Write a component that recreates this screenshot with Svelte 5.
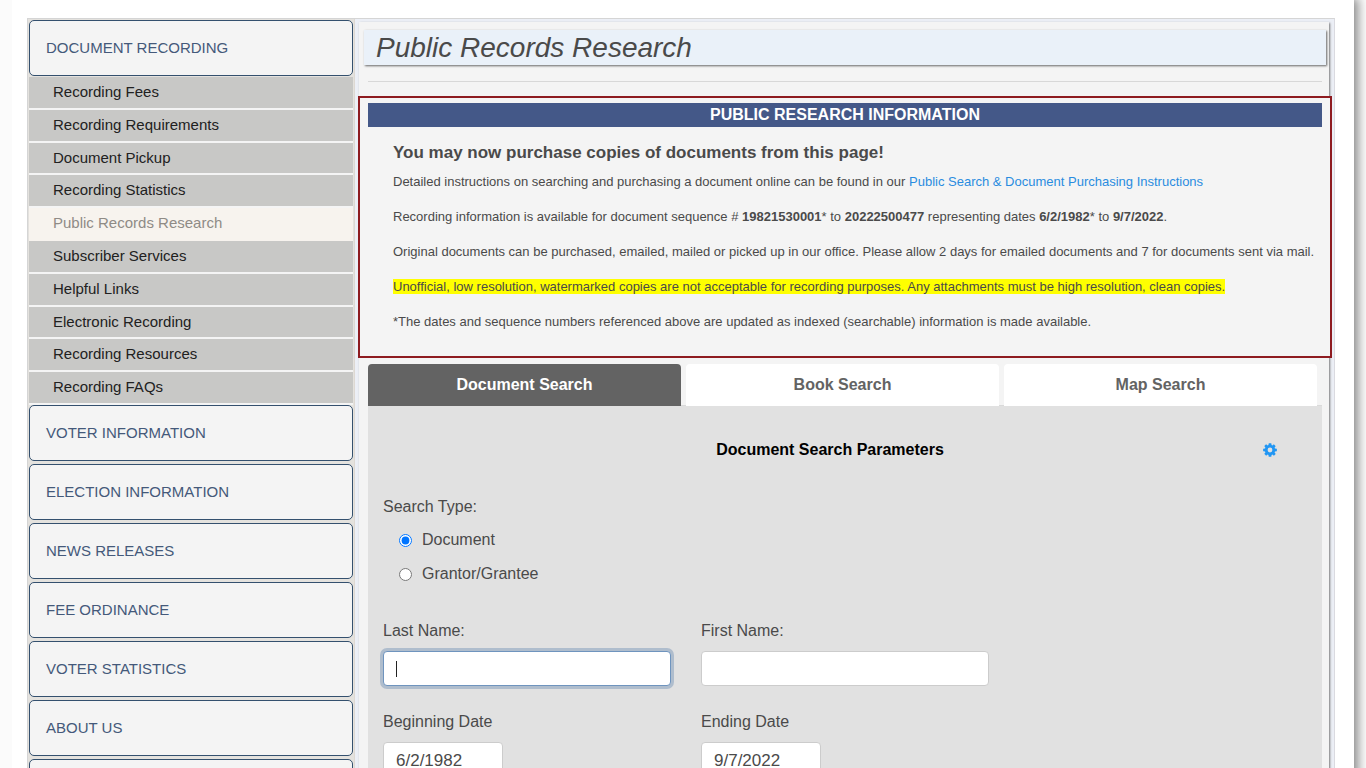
<script lang="ts">
    import { onMount } from 'svelte';

    const recordingLinks = [
        "Recording Fees",
        "Recording Requirements",
        "Document Pickup",
        "Recording Statistics",
        "Public Records Research",
        "Subscriber Services",
        "Helpful Links",
        "Electronic Recording",
        "Recording Resources",
        "Recording FAQs"
    ];

    const sections = [
        "Voter Information",
        "Election Information",
        "News Releases",
        "Fee Ordinance",
        "Voter Statistics",
        "About Us"
    ];

    const tabs = ["Document Search", "Book Search", "Map Search"];

    let currentLink = $state("Public Records Research");
    let currentTab = $state("Document Search");
    let searchType = $state("document");

    let lastName = $state("");
    let firstName = $state("");
    let beginDate = $state("6/2/1982");
    let endDate = $state("9/7/2022");

    let lastNameInput: HTMLInputElement;

    onMount(() => lastNameInput.focus());
</script>

<div class="page">
    <div class="columns">
        <nav class="sidebar">
            <button type="button" class="section">Document Recording</button>
            <ul>
                {#each recordingLinks as link}
                    <li><a href="#top" class:active={link == currentLink} onclick={() => currentLink = link}>{link}</a></li>
                {/each}
            </ul>
            {#each sections as section}
                <button type="button" class="section">{section}</button>
            {/each}
            <button type="button" class="section" aria-label="More"></button>
        </nav>

        <main>
            <div class="content">
                <h1>Public Records Research</h1>
                <hr>

                <section class="info">
                    <h2>PUBLIC RESEARCH INFORMATION</h2>
                    <div class="info-text">
                        <h3>You may now purchase copies of documents from this page!</h3>
                        <p>Detailed instructions on searching and purchasing a document online can be found in our <a href="#instructions">Public Search &amp; Document Purchasing Instructions</a></p>
                        <p>Recording information is available for document sequence # <b>19821530001</b>* to <b>20222500477</b> representing dates <b>6/2/1982</b>* to <b>9/7/2022</b>.</p>
                        <p>Original documents can be purchased, emailed, mailed or picked up in our office. Please allow 2 days for emailed documents and 7 for documents sent via mail.</p>
                        <p><mark>Unofficial, low resolution, watermarked copies are not acceptable for recording purposes. Any attachments must be high resolution, clean copies.</mark></p>
                        <p>*The dates and sequence numbers referenced above are updated as indexed (searchable) information is made available.</p>
                    </div>
                </section>

                <div class="tabs" role="tablist">
                    {#each tabs as tab}
                        <button type="button" role="tab" aria-selected={tab == currentTab} class:selected={tab == currentTab} onclick={() => currentTab = tab}>{tab}</button>
                    {/each}
                </div>

                <form class="search">
                    <div class="search-head">
                        <h4>Document Search Parameters</h4>
                        <button type="button" class="gear" aria-label="Settings">
                            <svg viewBox="0 0 1536 1792" width="14" height="16">
                                <path fill="currentColor" d="M1038 896a270 270 0 1 0-540 0 270 270 0 1 0 540 0zM1536 787v222q0 12-8 23t-20 13l-185 28q-19 54-39 91 35 50 107 138 10 12 10 25t-9 23q-27 37-99 108t-94 71q-12 0-26-9l-138-108q-44 23-91 38-16 136-29 186-7 28-36 28h-222q-14 0-24.500-8.500t-11.500-21.500l-28-184q-49-16-90-37l-141 107q-10 9-25 9-14 0-25-11-126-114-165-168-7-10-7-23 0-12 8-23 15-21 51-66.500t54-70.500q-27-50-41-99l-183-27q-13-2-21-12.500t-8-23.500v-222q0-12 8-23t19-13l186-28q14-46 39-92-40-57-107-138-10-12-10-24 0-10 9-23 26-36 98.500-107.500t94.500-71.500q13 0 26 10l138 107q44-23 91-38 16-136 29-186 7-28 36-28h222q14 0 24.500 8.500t11.500 21.500l28 184q49 16 90 37l142-107q9-9 24-9 13 0 25 10 129 119 165 170 7 8 7 22 0 12-8 23-15 21-51 66.500t-54 70.500q26 50 41 98l183 28q13 2 21 12.500t8 23.500z"/>
                            </svg>
                        </button>
                    </div>

                    <fieldset>
                        <legend>Search Type:</legend>
                        <label><input type="radio" value="document" bind:group={searchType}>Document</label>
                        <label><input type="radio" value="grantor" bind:group={searchType}>Grantor/Grantee</label>
                    </fieldset>

                    <div class="fields">
                        <div class="field">
                            <label for="last-name">Last Name:</label>
                            <input id="last-name" type="text" placeholder=" " bind:this={lastNameInput} bind:value={lastName}>
                        </div>
                        <div class="field">
                            <label for="first-name">First Name:</label>
                            <input id="first-name" type="text" placeholder=" " bind:value={firstName}>
                        </div>
                        <div class="field">
                            <label for="begin-date">Beginning Date</label>
                            <input id="begin-date" class="date" type="text" bind:value={beginDate}>
                        </div>
                        <div class="field">
                            <label for="end-date">Ending Date</label>
                            <input id="end-date" class="date" type="text" bind:value={endDate}>
                        </div>
                    </div>
                </form>
            </div>
        </main>
    </div>
</div>

<style>
    :global(html) {
        scrollbar-width: none;
    }
    :global(body) {
        margin: 0;
        background-color: #FBFBFB;
    }
    .page {
        box-sizing: border-box;
        margin: 0 12px;
        padding: 18px 19px 0 15px;
        background-color: #FFFFFF;
        box-shadow: 2px 0 10px 2px #888888;
        clip-path: inset(0 -12px 0 0);
        font-family: "Liberation Sans", Arial, sans-serif;
        font-size: 16px;
        line-height: 24px;
        color: #4A4A4A;
    }
    .columns {
        display: flex;
        border: 1px solid #D5D5D5;
        border-right-color: #DADAE0;
        border-bottom: none;
        background-color: #F4F4F4;
    }
    .sidebar {
        flex: none;
        box-sizing: border-box;
        width: 327px;
        padding: 1px;
        border-right: 1px solid #DDD8D2;
        background-color: #E4E2DE;
    }
    .section {
        display: block;
        box-sizing: border-box;
        width: 100%;
        height: 56px;
        margin-bottom: 3px;
        padding: 0 16px;
        border: 1px solid #34506E;
        border-radius: 5px;
        background-color: #F4F4F4;
        font: inherit;
        font-size: 15px;
        text-align: left;
        text-transform: uppercase;
        color: #44597A;
    }
    .section:first-child {
        margin-bottom: 0;
    }
    ul {
        display: grid;
        grid-auto-rows: 1fr;
        height: 328px;
        margin: 1px 0 0;
        padding: 0;
        list-style: none;
    }
    li {
        display: grid;
    }
    li a {
        padding: 0 24px;
        border-bottom: 2px solid #F4F4F4;
        background-color: #C8C8C6;
        font-size: 15px;
        line-height: 30px;
        color: #212121;
        text-decoration: none;
    }
    li a.active {
        border-color: #F7F3EE;
        background-color: #F7F3EE;
        color: #8F8B86;
    }
    main {
        flex: 1;
        min-width: 0;
        padding: 3px 5px 0 4px;
        background-color: #ECEFF6;
    }
    .content {
        padding: 8px 7px 0 9px;
        background-color: #F4F4F4;
        box-shadow: 1px 1px 2px #777777;
    }
    h1 {
        margin: 0 -4px 0 -4px;
        padding: 0 12px;
        background-color: #EAF1F9;
        box-shadow: 1px 1px 2px #666666;
        font-size: 28px;
        font-style: italic;
        font-weight: normal;
        line-height: 35px;
    }
    hr {
        margin: 16px 0 14px;
        border: none;
        border-top: 1px solid #D8D8D8;
    }
    .info {
        margin: 0 -10px 6px;
        padding: 5px 8px 24px;
        border: 2px solid #8E1B20;
        background-color: #F4F4F4;
    }
    h2 {
        margin: 0;
        background-color: #445888;
        font-size: 16px;
        line-height: 24px;
        text-align: center;
        color: #FFFFFF;
    }
    .info-text {
        padding: 14px 0 0 25px;
    }
    h3 {
        margin: 0 0 7px;
        font-size: 17px;
        line-height: 24px;
    }
    p {
        margin: 0 0 15px;
        font-size: 13px;
        line-height: 20px;
    }
    p:last-child {
        margin-bottom: 0;
    }
    p a {
        color: #2A8CE0;
        text-decoration: none;
    }
    mark {
        background-color: #FFFF00;
        color: inherit;
    }
    .tabs {
        display: flex;
        gap: 5px;
        padding-right: 5px;
        box-shadow: inset 0 -1px #DADADA;
    }
    .tabs button {
        flex: 1;
        height: 42px;
        padding: 0;
        border: none;
        border-radius: 4px 4px 0 0;
        background-color: #FFFFFF;
        font: inherit;
        font-weight: bold;
        color: #636363;
    }
    .tabs button.selected {
        background-color: #636363;
        color: #FFFFFF;
    }
    .search {
        padding: 32px 45px 24px 15px;
        background-color: #E1E1E1;
    }
    .search-head {
        display: grid;
        grid-template-columns: 14px 1fr 14px;
        align-items: center;
    }
    h4 {
        grid-column: 2;
        margin: 0;
        font-size: 16px;
        text-align: center;
        color: #000000;
    }
    .gear {
        display: flex;
        padding: 0;
        border: none;
        background: none;
        color: #2196F3;
    }
    fieldset {
        margin: 33px 0 0;
        padding: 0;
        border: none;
    }
    legend {
        padding: 0;
    }
    fieldset label {
        display: flex;
        gap: 10px;
        align-items: center;
        margin: 9px 0 10px 16px;
    }
    input[type="radio"] {
        width: 13px;
        height: 13px;
        margin: 0;
    }
    .fields {
        display: grid;
        grid-template-columns: 288px 288px;
        gap: 24px 30px;
        margin-top: 23px;
    }
    .field {
        display: flex;
        flex-direction: column;
        align-items: flex-start;
        gap: 8px;
    }
    .field input {
        box-sizing: border-box;
        width: 100%;
        height: 35px;
        padding: 0 12px;
        border: 1px solid #CCCCCC;
        border-radius: 4px;
        background-color: #FFFFFF;
        font: inherit;
        color: inherit;
    }
    .field input:focus {
        border-color: #6F94BE;
        outline: none;
        box-shadow: 0 0 0 3px #AFBDCD;
    }
    /* steady caret while the box is empty */
    .field input:focus:placeholder-shown {
        background: #FFFFFF linear-gradient(#222222, #222222) 12px center / 1px 16px no-repeat;
        caret-color: transparent;
    }
    .field input.date {
        width: 120px;
        height: 38px;
        font-size: 17px;
    }
</style>
